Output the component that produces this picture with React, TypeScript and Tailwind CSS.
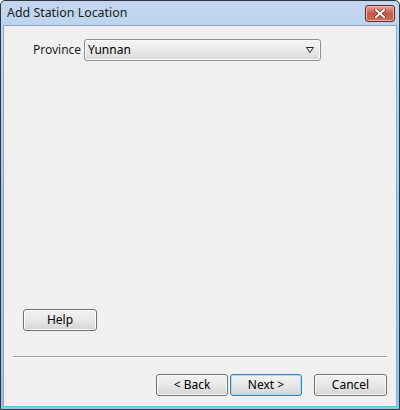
import React from "react";

const font = { fontFamily: '"Noto Sans", "Open Sans", "Liberation Sans", sans-serif' };

function WinButton({ label, primary, className }: { label: string; primary?: boolean; className?: string }) {
  return (
    <button
      className={`h-[22px] rounded-[3px] border text-[12px] leading-none text-black bg-gradient-to-b from-[#f2f2f2] via-[#e8e8e8] to-[#d4d4d4] ${
        primary ? "border-[#3c7fb1] shadow-[inset_0_0_0_1px_#a6dcf5]" : "border-[#707070] shadow-[inset_0_0_0_1px_#fbfbfb]"
      } ${className ?? ""}`}
    >
      {label}
    </button>
  );
}

function CloseButton() {
  return (
    <div className="w-[30px] h-[17px] rounded-[3px] border border-[#5e2a26] bg-gradient-to-b from-[#e5a898] via-[#c8594a] to-[#d06a55] flex items-center justify-center shadow-[inset_0_0_0_1px_#e9b6aa]">
      <svg width="12" height="9" viewBox="0 0 12 9">
        <path d="M2 1 L10 8 M10 1 L2 8" stroke="#5a2a26" strokeWidth="3.2" strokeLinecap="square" />
        <path d="M2 1 L10 8 M10 1 L2 8" stroke="#ffffff" strokeWidth="2" strokeLinecap="square" />
      </svg>
    </div>
  );
}

export default function App() {
  return (
    <div style={font} className="w-[400px] h-[410px] bg-white">
      <div className="w-full h-full border border-[#2d3540] rounded-t-[5px] bg-gradient-to-b from-[#c2d7ee] via-[#aac5e4] to-[#9fc0e3] flex flex-col overflow-hidden">
        <div className="h-[24px] flex items-center justify-between pl-[6px] pr-[4px] pt-px">
          <span className="text-[12.4px] text-[#1b1b1b]">Add Station Location</span>
          <CloseButton />
        </div>
        <div className="flex-1 mx-[2px] mb-[2px] border border-[#8aa6c4] border-b-[#52c6e6] border-r-[#52c6e6] bg-[#f0f0f0] flex flex-col">
          <div className="pt-[13px] pl-[29px] flex items-center gap-[6px]">
            <span className="text-[12px] text-[#1e1e1e] w-[45px]">Province</span>
            <div className="w-[237px] h-[22px] rounded-[3px] border border-[#8e8f8f] bg-gradient-to-b from-[#f4f4f4] via-[#eaeaea] to-[#d8d8d8] flex items-center justify-between pl-[3px] pr-[6px] shadow-[inset_0_0_0_1px_#fafafa]">
              <span className="text-[12px] text-black">Yunnan</span>
              <svg width="8" height="6" viewBox="0 0 8 6">
                <path d="M0.5 0.5 H7.5 L4 5.5 Z" fill="#ffffff" stroke="#222" strokeWidth="1" />
              </svg>
            </div>
          </div>
          <div className="flex-1" />
          <div className="pl-[19px]">
            <WinButton label="Help" className="w-[74px]" />
          </div>
          <div className="mx-[9px] mt-[25px] h-px bg-[#a0a0a0] border-b border-white box-content" />
          <div className="flex justify-end items-center pr-[9px] pt-[16px] pb-[10px]">
            <WinButton label="< Back" className="w-[72px]" />
            <WinButton label="Next >" primary className="w-[72px] ml-[2px]" />
            <WinButton label="Cancel" className="w-[73px] ml-[12px]" />
          </div>
        </div>
      </div>
    </div>
  );
}
